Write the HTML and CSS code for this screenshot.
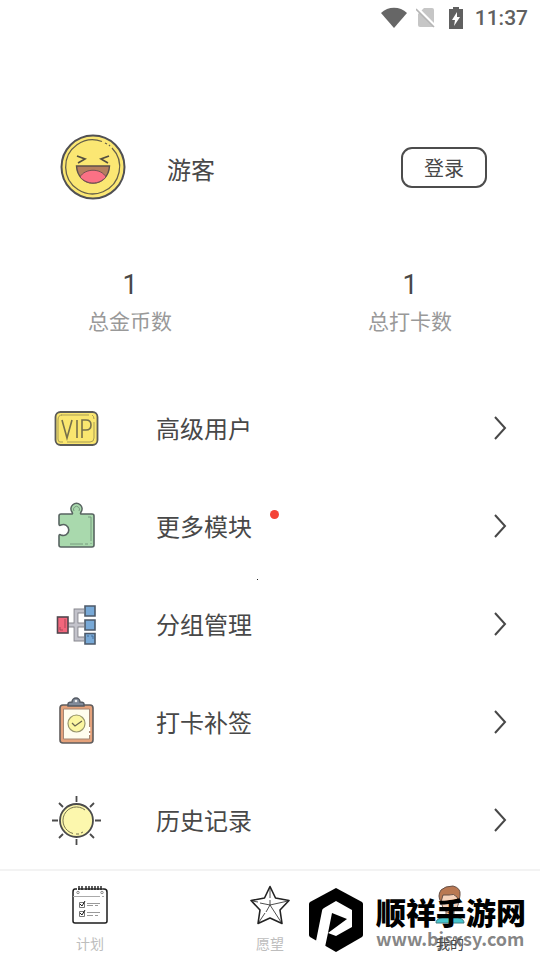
FILE: index.html
```html
<!DOCTYPE html>
<html lang="zh-CN">
<head>
<meta charset="utf-8">
<meta name="viewport" content="width=device-width, initial-scale=1">
<title>我的</title>
<link rel="stylesheet" href="styles.css">
</head>
<body>
<div class="app">
  <header class="status">
    <svg width="26" height="22" viewBox="0 0 26 22"><path d="M0 6C7-1 19-1 26 6L13 21Z" fill="#666"/></svg>
    <svg class="sim" width="20" height="20" viewBox="0 0 20 20"><path d="M8 0H16Q18 0 18 2V19H4Q2 19 2 17V6Z" fill="#c6c6c6"/><path d="M1 0L20 19" stroke="#fff" stroke-width="3"/><path d="M0 1L18 19" stroke="#b5b5b5" stroke-width="1.6"/></svg>
    <svg class="battery" width="14" height="22" viewBox="0 0 14 22"><path d="M4 0H10V2H14V22H0V2H4Z" fill="#606060"/><path d="M8 5L3 13H6L5 19L11 10H8Z" fill="#fff"/></svg>
    <time>11:37</time>
  </header>

  <main>
    <section class="profile">
      <svg width="66" height="66" viewBox="0 0 66 66" fill="none">
        <circle cx="33" cy="33" r="31.5" fill="#fbe773" stroke="#505054" stroke-width="2"/>
        <path d="M52 14A27 27 0 1 1 42 7.500M45 9L47 10M49 11L50 12" stroke="#66604a" stroke-width="1.3"/>
        <path d="M17 22L25 25L18 29M49 22L41 25L48 29" stroke="#55503f" stroke-width="1.7"/>
        <path d="M16.500 32H49.500C49 42 42 49 33 49S17 42 16.500 32Z" fill="#b67f5e" stroke="#5c504b" stroke-width="1.4"/>
        <path d="M20 43C25 34 41 34 46 43C39 51 27 51 20 43Z" fill="#fb7185" stroke="#775054"/>
      </svg>
      <h1>游客</h1>
      <button class="login" type="button">登录</button>
    </section>

    <section class="stats">
      <div class="stat"><strong>1</strong><span>总金币数</span></div>
      <div class="stat"><strong>1</strong><span>总打卡数</span></div>
    </section>

    <nav class="menu">
      <a href="#vip">
        <svg class="icon" viewBox="0 0 52 52" fill="none">
          <rect x="5.500" y="10" width="42" height="33" rx="5" fill="#fae66f" stroke="#5b5b58" stroke-width="1.800"/>
          <path d="M11 13H39M44 20V36Q44 40 40 40H17M13 40H10Q8 40 8 37V18Q8 13 12 13M42 13Q44 14 44 17" stroke="#a99d56"/>
          <path d="M12 18L17 36L22 18M27 18V36M32 36V18H36Q41 18 41 23T36 28H32" stroke="#77704b" stroke-width="1.6"/>
        </svg>
        <span>高级用户</span>
        <svg class="chevron" viewBox="0 0 14 26"><path d="M2 2L12 13L2 24"/></svg>
      </a>
      <a href="#modules">
        <svg class="icon" viewBox="0 0 52 52" fill="none">
          <path d="M11 14H22Q23 14 22 12A5.500 5.500 0 1 1 31 12Q30 14 31 14H42Q44 14 44 16V45Q44 47 42 47H11Q9 47 9 45V36Q9 34 11 35A5.500 5.500 0 1 0 11 25Q9 26 9 24V16Q9 14 11 14Z" fill="#a9d9ad" stroke="#586461" stroke-width="1.600"/>
          <path d="M24 11A3 3 0 1 1 29 11M38 17H41V41M41 43V44M20 44H33M35 44H38" stroke="#779b7e"/>
        </svg>
        <span>更多模块<i class="dot"></i></span>
        <svg class="chevron" viewBox="0 0 14 26"><path d="M2 2L12 13L2 24"/></svg>
      </a>
      <a href="#groups">
        <svg class="icon" viewBox="0 0 52 52" fill="none">
          <path d="M18 27H34M34 13H26V41H34" stroke="#85858c" stroke-width="4.800"/>
          <path d="M18 27H34M34 13H26V41H34" stroke="#c3c3cb" stroke-width="3"/>
          <rect x="7.500" y="19" width="10.500" height="16" fill="#f3667c" stroke="#51474e" stroke-width="1.600"/>
          <path d="M10 29V32H13M15 21V30" stroke="#a94859"/>
          <path d="M35 8H45V18H35ZM35 22H45V32H35ZM35 35.500H45V46H35Z" fill="#78a9d7" stroke="#4d5a6a" stroke-width="1.600"/>
          <path d="M37 38H39M41 38H43V41" stroke="#456e9b"/>
        </svg>
        <span>分组管理</span>
        <svg class="chevron" viewBox="0 0 14 26"><path d="M2 2L12 13L2 24"/></svg>
      </a>
      <a href="#makeup">
        <svg class="icon" viewBox="0 0 52 52" fill="none">
          <rect x="10" y="9" width="33" height="38" rx="3" fill="#e5a27b" stroke="#605d5d" stroke-width="1.600"/>
          <path d="M13.500 13H39.500V43H13.500Z" fill="#fffdee" stroke="#a58672"/>
          <path d="M18 10V8Q18 6 22 6A4 4 0 0 1 30 6Q34 6 34 8V10Z" fill="#818a99" stroke="#535962" stroke-width="1.400"/>
          <circle cx="26" cy="5" r="1.300" fill="#eee"/>
          <circle cx="26.500" cy="27.500" r="8.500" fill="#fbf6a1" stroke="#98966b" stroke-width="1.200"/>
          <path d="M22 27L25 30L32 25" stroke="#69654e" stroke-width="1.300"/>
          <path d="M39.500 31V35M39.500 37V39" stroke="#fff" stroke-width="1.500"/>
        </svg>
        <span>打卡补签</span>
        <svg class="chevron" viewBox="0 0 14 26"><path d="M2 2L12 13L2 24"/></svg>
      </a>
      <a href="#history">
        <svg class="icon" viewBox="0 0 52 52" fill="none">
          <circle cx="26.500" cy="26.500" r="16.500" fill="#fcf7ad" stroke="#4b4b4b" stroke-width="1.800"/>
          <path d="M35 16A13.500 13.500 0 1 0 23 39.500M26 40H29M31 39L33 38" stroke="#76734f"/>
          <path d="M26.500 2V8M26.500 45V51M2 26.500H8M45 26.500H51M9 9L13 13M40 40L44 44M44 9L40 13M13 40L9 44" stroke="#4b4b4b" stroke-width="1.800"/>
        </svg>
        <span>历史记录</span>
        <svg class="chevron" viewBox="0 0 14 26"><path d="M2 2L12 13L2 24"/></svg>
      </a>
    </nav>
    <i class="speck"></i>
  </main>

  <footer>
    <nav class="tabs">
      <a href="#plan">
        <svg viewBox="0 0 42 42" fill="none" stroke="#1d1d1d">
          <path d="M8 4H6Q4 4 4 7V36Q4 38 6 38H36Q38 38 38 36V7Q38 4 35 4H34" stroke-width="1.500"/>
          <path d="M9 4H34" stroke-width="1.300"/>
          <path d="M10 1V5M13 1V5M17 1V5M20 1V5M23 1V5M26 1V5M29 1V5M32 1V5" stroke-width="1.400"/>
          <path d="M4 11.500H31M33 11.500H35" stroke="#aaa"/>
          <circle cx="9" cy="7.500" r="1.200" stroke="#888"/><circle cx="33" cy="7.500" r="1.200" stroke="#888"/>
          <path d="M10.500 17.500H15.500V22.500H10.500ZM10.500 26.500H15.500V31.500H10.500Z" stroke="#777"/>
          <path d="M11 19L13 21L16 16M11 28L13 30L16 25" stroke-width="1"/>
          <path d="M18 18.500H31M18 20.500H24M26 20.500H29M18 27.500H31M18 30.500H24M26 30.500H29" stroke="#999"/>
        </svg>
        <span>计划</span>
      </a>
      <a href="#wish">
        <svg viewBox="0 0 42 42" fill="none" stroke="#222">
          <path d="M21 1.500L26.500 13L40 15.500L31 25L33 38.500L21 33L9 38.500L11 25L2 15.500L15.500 13Z" stroke-width="1.600" stroke-linejoin="round"/>
          <path d="M21 2V13M21 15V20L39 16M21 20L32 37M21 20L17 27M16 28L10 37M21 20L11 18M9 17L3 16" stroke-width=".8"/>
        </svg>
        <span>愿望</span>
      </a>
      <a class="active" href="#me">
        <svg viewBox="0 0 42 42" fill="none">
          <path d="M7 38Q7 34 12 33L18 30H24L30 33Q35 34 35 38Z" fill="#47c5cd" stroke="#407c82"/>
          <path d="M17 23V31Q21 35 25 31V23" fill="#efc4a7" stroke="#846657"/>
          <path d="M12 12Q12 27 21 28Q30 27 30 12L26 8H16Z" fill="#f6d2bb" stroke="#795e54"/>
          <path d="M12 17Q8 11 12 5Q16 1 24 1Q32 3 31 10L30 17L28 12Q25 8 20 10H14L12 17Z" fill="#b97852" stroke="#675046"/>
        </svg>
        <span>我的</span>
      </a>
    </nav>
    <div class="brand">
      <svg width="56" height="66" viewBox="0 0 56 66"><path d="M28 1L54 15Q55 16 55 17V48Q55 49 54 50L28 65L2 50Q1 49 1 48V17Q1 16 2 15Z" fill="#000"/><path d="M16 21L28 14L44 23V40L28 49L20 46L17 60L8 54L14 24Q14 22 16 21ZM24 26L20 46L39 32Z" fill="#fff" fill-rule="evenodd"/></svg>
      <div class="brand-text"><b>顺祥手游网</b><small>www.bjsxsy.com</small></div>
    </div>
  </footer>
</div>
</body>
</html>
```
FILE: styles.css
```css
* { box-sizing: border-box; }
body {
  margin: 0;
  background: #fff;
  color: #484848;
  font-family: Roboto, "Noto Sans CJK SC", sans-serif;
}
a { color: inherit; text-decoration: none; }
svg { display: block; flex: none; }
.app { min-height: 100vh; display: flex; flex-direction: column; }
.status {
  height: 36px;
  padding: 0 12px;
  display: flex;
  align-items: center;
  justify-content: flex-end;
  color: #606060;
}
.status .sim { margin-left: 9px; }
.status .battery { margin: 0 12px 0 13px; }
.status time { font-size: 21px; font-weight: 500; line-height: 36px; }
main { position: relative; flex: 1; }
.profile {
  display: flex;
  align-items: center;
  padding: 98px 53px 0 60px;
}
.profile h1 {
  margin: 0 auto 0 41px;
  padding-top: 8px;
  font-size: 24px;
  font-weight: 400;
  line-height: 36px;
}
.login {
  width: 86px;
  height: 41px;
  padding: 0;
  border: 2px solid #4c4c4c;
  border-radius: 11px;
  background: #fff;
  color: inherit;
  font: inherit;
  font-size: 20px;
}
.stats {
  display: flex;
  justify-content: space-between;
  padding: 67px 88px 0;
}
.stat { display: flex; flex-direction: column; align-items: center; }
.stat strong { font-size: 27px; font-weight: 400; line-height: 36px; }
.stat span { color: #999; font-size: 21px; line-height: 38px; }
.menu { padding-top: 38px; }
.menu a {
  height: 98px;
  padding: 0 33px 0 50px;
  display: flex;
  align-items: center;
}
.menu span {
  position: relative;
  margin: 0 auto 0 54px;
  padding-top: 4px;
  font-size: 24px;
  line-height: 36px;
}
.icon { width: 52px; height: 52px; }
.chevron {
  width: 14px;
  height: 26px;
  fill: none;
  stroke: #484848;
  stroke-width: 2;
}
.dot {
  position: absolute;
  top: 4px;
  right: -27px;
  width: 9px;
  height: 9px;
  border-radius: 50%;
  background: #f44336;
}
.speck {
  position: absolute;
  left: 257px;
  top: 543px;
  width: 1px;
  height: 1px;
  background: #222;
}
footer { position: relative; border-top: 2px solid #f3f3f3; }
.tabs { display: grid; grid-template-columns: repeat(3, 1fr); }
.tabs a {
  height: 90px;
  padding-top: 14px;
  display: flex;
  flex-direction: column;
  align-items: center;
  color: #bdbdbd;
  font-size: 14px;
}
.tabs svg { width: 42px; height: 42px; }
.tabs span { margin-top: 6px; line-height: 22px; }
.tabs .active { color: #484848; }
.brand {
  position: absolute;
  right: 14px;
  bottom: 8px;
  display: flex;
  align-items: center;
  gap: 12px;
  pointer-events: none;
}
.brand-text {
  display: flex;
  flex-direction: column;
  padding-top: 2px;
  font-family: "Noto Sans CJK SC", sans-serif;
}
.brand b { color: #000; font-size: 30px; font-weight: 900; line-height: 34px; }
.brand small {
  color: rgba(80, 80, 80, .7);
  font-size: 18px;
  font-weight: 700;
  line-height: 20px;
}
```
